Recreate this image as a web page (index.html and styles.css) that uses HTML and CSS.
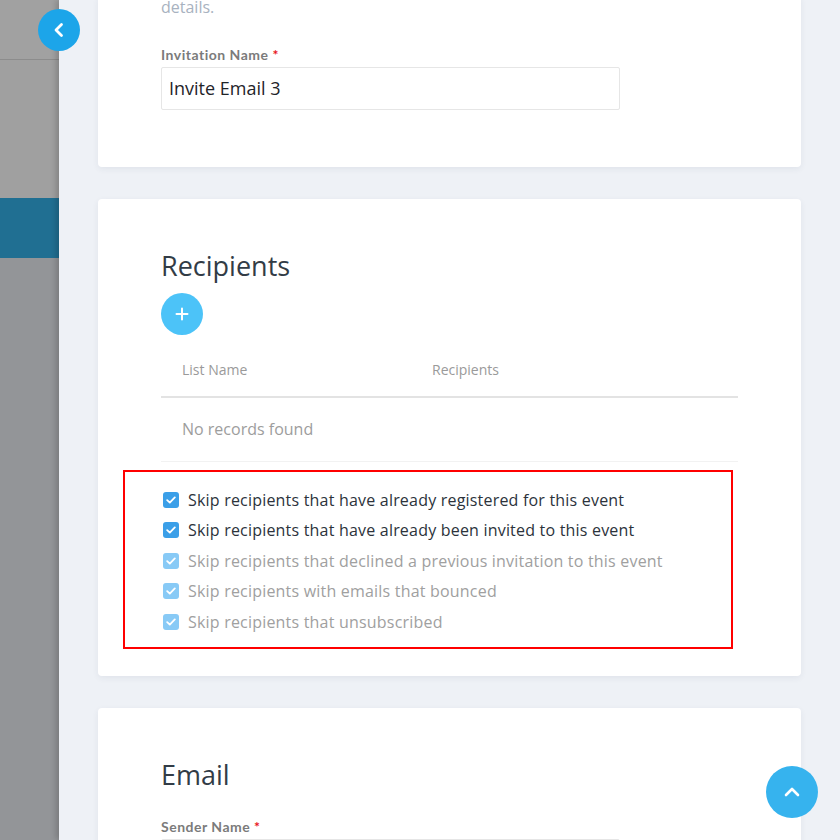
FILE: index.html
```html
<!DOCTYPE html>
<html lang="en">
<head>
<meta charset="utf-8">
<title>Invitation</title>
<link rel="stylesheet" href="styles.css">
</head>
<body>
<div class="screen">
  <aside class="backdrop">
    <div class="bd-top"></div>
    <div class="bd-mid"></div>
    <div class="bd-active"></div>
    <div class="bd-rest"></div>
  </aside>
  <main class="panel">
    <button class="back-btn" aria-label="Back">
      <svg width="14" height="16" viewBox="0 0 14 16"><path d="M9.5 2.5 L4 8 L9.5 13.5" fill="none" stroke="#fff" stroke-width="2.8" stroke-linecap="round" stroke-linejoin="round"/></svg>
    </button>

    <section class="card card-first">
      <p class="desc">details.</p>
      <label class="field-label">Invitation Name <span class="req">*</span></label>
      <div class="input">Invite Email 3</div>
    </section>

    <section class="card">
      <h2 class="card-title">Recipients</h2>
      <button class="add-btn" aria-label="Add">
        <svg width="14" height="14" viewBox="0 0 14 14"><path d="M7 1.5 V12.5 M1.5 7 H12.5" stroke="#fff" stroke-width="2" stroke-linecap="round"/></svg>
      </button>
      <table class="table">
        <thead>
          <tr><th class="col-name">List Name</th><th>Recipients</th></tr>
        </thead>
        <tbody>
          <tr><td colspan="2">No records found</td></tr>
        </tbody>
      </table>
      <div class="skip-box">
        <div class="check-row"><span class="cb"><svg width="10" height="8" viewBox="0 0 10 8"><path d="M1.2 4.2 L3.8 6.6 L8.8 1.4" fill="none" stroke="#fff" stroke-width="1.8" stroke-linecap="round" stroke-linejoin="round"/></svg></span><span class="cb-text">Skip recipients that have already registered for this event</span></div>
        <div class="check-row"><span class="cb"><svg width="10" height="8" viewBox="0 0 10 8"><path d="M1.2 4.2 L3.8 6.6 L8.8 1.4" fill="none" stroke="#fff" stroke-width="1.8" stroke-linecap="round" stroke-linejoin="round"/></svg></span><span class="cb-text">Skip recipients that have already been invited to this event</span></div>
        <div class="check-row disabled"><span class="cb"><svg width="10" height="8" viewBox="0 0 10 8"><path d="M1.2 4.2 L3.8 6.6 L8.8 1.4" fill="none" stroke="#fff" stroke-width="1.8" stroke-linecap="round" stroke-linejoin="round"/></svg></span><span class="cb-text">Skip recipients that declined a previous invitation to this event</span></div>
        <div class="check-row disabled"><span class="cb"><svg width="10" height="8" viewBox="0 0 10 8"><path d="M1.2 4.2 L3.8 6.6 L8.8 1.4" fill="none" stroke="#fff" stroke-width="1.8" stroke-linecap="round" stroke-linejoin="round"/></svg></span><span class="cb-text">Skip recipients with emails that bounced</span></div>
        <div class="check-row disabled"><span class="cb"><svg width="10" height="8" viewBox="0 0 10 8"><path d="M1.2 4.2 L3.8 6.6 L8.8 1.4" fill="none" stroke="#fff" stroke-width="1.8" stroke-linecap="round" stroke-linejoin="round"/></svg></span><span class="cb-text">Skip recipients that unsubscribed</span></div>
      </div>
    </section>

    <section class="card">
      <h2 class="card-title">Email</h2>
      <label class="field-label field-label-2">Sender Name <span class="req">*</span></label>
      <div class="input"></div>
    </section>

    <button class="top-btn" aria-label="Scroll to top">
      <svg width="18" height="12" viewBox="0 0 18 12"><path d="M3 9 L9 3 L15 9" fill="none" stroke="#fff" stroke-width="2.6" stroke-linecap="round" stroke-linejoin="round"/></svg>
    </button>
  </main>
</div>
</body>
</html>
```

FILE: styles.css
```css
* { box-sizing: border-box; }
html, body { margin: 0; padding: 0; }
body {
  font-family: "Open Sans", Lato, "Liberation Sans", sans-serif;
  background: #eef1f6;
  height: 840px;
  overflow: hidden;
}
.screen {
  display: flex;
  height: 840px;
  overflow: hidden;
}
.backdrop {
  width: 59px;
  flex: none;
  display: flex;
  flex-direction: column;
  background: #939598;
}
.bd-top { height: 60px; background: #a1a1a1; border-bottom: 1px solid #8c8c8c; }
.bd-mid { height: 138px; background: #a0a0a0; }
.bd-active { height: 60px; background: #206f92; }
.bd-rest { flex: 1; background: #939598; }

.panel {
  flex: 1;
  position: relative;
  background: #eef1f6;
  padding: 0 39px;
  box-shadow: -3px 0 6px rgba(0,0,0,0.18);
}
.card {
  background: #fff;
  border-radius: 4px;
  box-shadow: 0 2px 6px rgba(40,60,90,0.07);
  padding: 51px 63px 27px;
  margin-bottom: 32px;
}
.card-first {
  margin-top: -3px;
  border-radius: 0 0 4px 4px;
  padding-top: 0;
  padding-bottom: 57px;
}
.desc {
  margin: 0;
  font-size: 16px;
  line-height: 20px;
  color: #a8b2c0;
}
.field-label {
  display: block;
  margin-top: 29px;
  font-family: Lato, "Open Sans", sans-serif;
  font-size: 14px;
  font-weight: 700;
  line-height: 17px;
  color: #7b7b7b;
  letter-spacing: 0.5px;
}
.req { color: #e8151b; }
.input {
  margin-top: 4px;
  width: 459px;
  height: 43px;
  border: 1px solid #e6e6e6;
  border-radius: 2px;
  padding: 0 7px;
  font-size: 18px;
  line-height: 41px;
  color: #1f2429;
}
.card-title {
  margin: 0;
  font-size: 27px;
  font-weight: 400;
  line-height: 32px;
  color: #323c46;
}
.add-btn {
  display: flex;
  align-items: center;
  justify-content: center;
  margin-top: 11px;
  width: 42px;
  height: 42px;
  border: none;
  border-radius: 50%;
  background: #4cc3f8;
  padding: 0;
}
.table {
  margin-top: 5px;
  width: 577px;
  border-collapse: collapse;
  font-size: 14px;
}
.table th {
  text-align: left;
  font-weight: 400;
  color: #9a9a9a;
  height: 57px;
  padding: 3px 0 0 21px;
  border-bottom: 2px solid #e3e3e3;
}
.table th.col-name { width: 250px; }
.table td {
  height: 64px;
  padding: 0 0 0 21px;
  font-size: 16px;
  color: #9d9d9d;
  border-bottom: 1px solid #f2f2f2;
}
.skip-box {
  margin: 8px 0 0 -38px;
  width: 610px;
  border: 2px solid #ff0000;
  padding: 13px 0 10px 37px;
}
.check-row {
  display: flex;
  align-items: center;
  height: 30.5px;
  font-size: 16px;
  letter-spacing: 0.2px;
  color: #2c333b;
}
.cb {
  width: 16px;
  height: 16px;
  margin-left: 1px;
  margin-right: 9px;
  border-radius: 3px;
  background: #3b9fe8;
  display: flex;
  align-items: center;
  justify-content: center;
  flex: none;
}
.check-row.disabled { color: #a0a0a0; }
.check-row.disabled .cb { background: #88caf6; }

.field-label-2 { margin-top: 27px; }

.back-btn {
  position: absolute;
  left: -21px;
  top: 9px;
  width: 42px;
  height: 42px;
  border: none;
  border-radius: 50%;
  background: #1ca5e9;
  padding: 0;
  display: flex;
  align-items: center;
  justify-content: center;
}
.top-btn {
  position: absolute;
  left: 707px;
  top: 766px;
  width: 52px;
  height: 52px;
  border: none;
  border-radius: 50%;
  background: #36b3ee;
  padding: 0;
  display: flex;
  align-items: center;
  justify-content: center;
}
```
